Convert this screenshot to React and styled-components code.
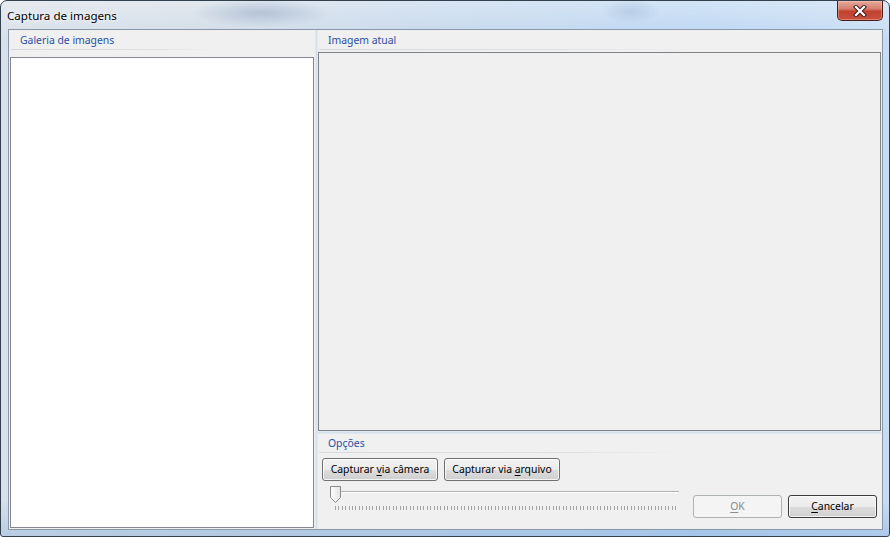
import React from 'react';
import styled, { createGlobalStyle } from 'styled-components';

const FONT = '"Noto Sans", "Open Sans", sans-serif';

const Global = createGlobalStyle`
  html, body { margin: 0; padding: 0; background: #ffffff; }
  body {
    width: 890px; height: 537px; overflow: hidden;
    font-family: ${FONT};
  }
  * { box-sizing: border-box; }
`;

const Window = styled.div`
  width: 890px;
  height: 537px;
  display: flex;
  flex-direction: column;
  border: 1px solid #33414f;
  border-radius: 7px 7px 3px 3px;
  padding: 0 6px 6px 7px;
  background:
    radial-gradient(ellipse 70px 14px at 260px 12px, rgba(110,135,170,0.35), rgba(110,135,170,0) 100%),
    radial-gradient(ellipse 30px 12px at 630px 10px, rgba(120,150,190,0.25), rgba(120,150,190,0) 100%),
    linear-gradient(180deg, rgba(255,255,255,0.35) 0px, rgba(255,255,255,0) 40px, rgba(255,255,255,0) 500px, rgba(120,165,215,0.35) 536px),
    linear-gradient(90deg, #d8e0e9 0%, #d0dbe7 25%, #c4d7ec 50%, #bad5f2 78%, #c6dcf3 100%);
`;

const TitleBar = styled.div`
  height: 28px;
  flex: 0 0 28px;
  margin: 0 -6px 0 -7px;
  padding: 0 6px;
  display: flex;
  align-items: flex-start;
`;

const Title = styled.div`
  font-size: 11.6px;
  line-height: 16px;
  margin-top: 7px;
  color: #000;
  text-shadow: 0 0 6px rgba(255,255,255,0.95), 0 0 3px rgba(255,255,255,0.9);
`;

const CloseButton = styled.div`
  margin-left: auto;
  width: 46px;
  height: 20px;
  border: 1px solid #4a1f1a;
  border-top: none;
  border-radius: 0 0 5px 5px;
  background: linear-gradient(180deg, #e6aa9d 0%, #d5806f 40%, #c2412e 55%, #c9503e 100%);
  box-shadow: inset 0 0 0 1px rgba(255,220,210,0.35);
  display: flex;
  align-items: center;
  justify-content: center;
`;

const Client = styled.div`
  flex: 1;
  display: flex;
  border: 1px solid #8797a8;
  background: #f0f0f0;
  min-height: 0;
`;

const LeftPanel = styled.div`
  width: 306px;
  flex: 0 0 306px;
  display: flex;
  flex-direction: column;
  padding: 0 1px 1px 1px;
`;

const VSplit = styled.div`
  width: 3px;
  flex: 0 0 3px;
  background: linear-gradient(90deg, #e4ebf2, #d6e1ec, #e4ebf2);
`;

const RightPanel = styled.div`
  flex: 1;
  display: flex;
  flex-direction: column;
  padding-right: 1px;
  min-width: 0;
`;

const Header = styled.div`
  height: ${p => p.$h}px;
  flex: 0 0 ${p => p.$h}px;
  padding-left: ${p => p.$pad}px;
  padding-top: ${p => p.$top}px;
  color: #2b4fa3;
  font-size: 10.4px;
  line-height: 16px;
  display: flex;
  flex-direction: column;
  &::after {
    content: "";
    display: block;
    height: 1px;
    margin-top: 1px;
    margin-left: -${p => p.$pad - 1}px;
    width: ${p => p.$line}px;
    background: linear-gradient(90deg, #d4d8dc 0%, #dcdfe2 60%, rgba(240,240,240,0) 100%);
  }
`;

const ListBox = styled.div`
  flex: 1;
  background: #ffffff;
  border: 1px solid #828790;
  box-shadow: inset 0 0 0 1px #ffffff;
`;

const ImageBox = styled.div`
  flex: 1;
  border: 1px solid #7f8388;
  background: #f0f0f0;
`;

const HSplit = styled.div`
  height: 3px;
  flex: 0 0 3px;
  background: linear-gradient(180deg, #e4ebf2, #d6e1ec, #e4ebf2);
`;

const Options = styled.div`
  height: 95px;
  flex: 0 0 95px;
  display: flex;
  flex-direction: column;
`;

const ButtonRow = styled.div`
  display: flex;
  gap: 6px;
  padding-left: 4px;
`;

const BottomRow = styled.div`
  flex: 1;
  display: flex;
  align-items: flex-start;
`;

const Button = styled.button`
  width: ${p => p.$w}px;
  height: 23px;
  padding: 0;
  font-family: ${FONT};
  font-size: 10.4px;
  line-height: 15px;
  color: ${p => (p.disabled ? '#8a8a8a' : '#000')};
  border: 1px solid ${p => (p.disabled ? '#adb2b5' : p.$default ? '#3c3c3c' : '#707070')};
  border-radius: 3px;
  background: ${p => (p.disabled
    ? '#f4f4f4'
    : 'linear-gradient(180deg, #f2f2f2 0%, #ebebeb 50%, #dddddd 51%, #cfcfcf 100%)')};
  box-shadow: inset 0 0 0 1px ${p => (p.disabled ? '#f4f4f4' : 'rgba(255,255,255,0.75)')};
  cursor: default;
`;

const U = styled.span`
  text-decoration: underline;
  text-underline-offset: 2px;
`;

const SliderWrap = styled.div`
  margin: 5px 0 0 12px;
  width: 351px;
  height: 24px;
  flex: 0 0 351px;
`;

const DialogButtons = styled.div`
  margin-left: auto;
  margin-right: 4px;
  margin-top: 14px;
  display: flex;
  gap: 6px;
`;

function Slider() {
  const ticks = [];
  for (let i = 0; i <= 100; i++) {
    const x = Math.round(5 + i * 3.4) + 0.5;
    ticks.push(<line key={i} x1={x} y1={20} x2={x} y2={24} stroke="#a3a3a3" strokeWidth="1" />);
  }
  return (
    <SliderWrap>
      <svg width="351" height="24" viewBox="0 0 351 24">
        <defs>
          <linearGradient id="thumb" x1="0" y1="0" x2="1" y2="0">
            <stop offset="0" stopColor="#fdfdfd" />
            <stop offset="1" stopColor="#e3e3e3" />
          </linearGradient>
        </defs>
        <line x1="5" y1="5.5" x2="349" y2="5.5" stroke="#b0b0b0" />
        <line x1="5" y1="6.5" x2="349" y2="6.5" stroke="#ffffff" />
        {ticks}
        <path d="M0.5 0.5 H10.5 V11.5 L5.5 16.5 L0.5 11.5 Z" fill="url(#thumb)" stroke="#8a8a8a" />
      </svg>
    </SliderWrap>
  );
}

export default function App() {
  return (
    <>
      <Global />
      <Window>
        <TitleBar>
          <Title>Captura de imagens</Title>
          <CloseButton>
            <svg width="14" height="12" viewBox="0 0 14 12">
              <path d="M3 2 L11 10 M11 2 L3 10" stroke="#3b1f1c" strokeWidth="4.2" strokeLinecap="square" />
              <path d="M3 2 L11 10 M11 2 L3 10" stroke="#ffffff" strokeWidth="2.2" strokeLinecap="square" />
            </svg>
          </CloseButton>
        </TitleBar>
        <Client>
          <LeftPanel>
            <Header $h={27} $pad={10} $top={2} $line={210}>Galeria de imagens</Header>
            <ListBox />
          </LeftPanel>
          <VSplit />
          <RightPanel>
            <Header $h={22} $pad={10} $top={2} $line={380}>Imagem atual</Header>
            <ImageBox />
            <HSplit />
            <Options>
              <Header $h={24} $pad={10} $top={1} $line={370}>Opções</Header>
              <ButtonRow>
                <Button $w={116}>Capturar <U>v</U>ia câmera</Button>
                <Button $w={116}>Capturar via <U>a</U>rquivo</Button>
              </ButtonRow>
              <BottomRow>
                <Slider />
                <DialogButtons>
                  <Button $w={89} disabled><U>O</U>K</Button>
                  <Button $w={89} $default><U>C</U>ancelar</Button>
                </DialogButtons>
              </BottomRow>
            </Options>
          </RightPanel>
        </Client>
      </Window>
    </>
  );
}
